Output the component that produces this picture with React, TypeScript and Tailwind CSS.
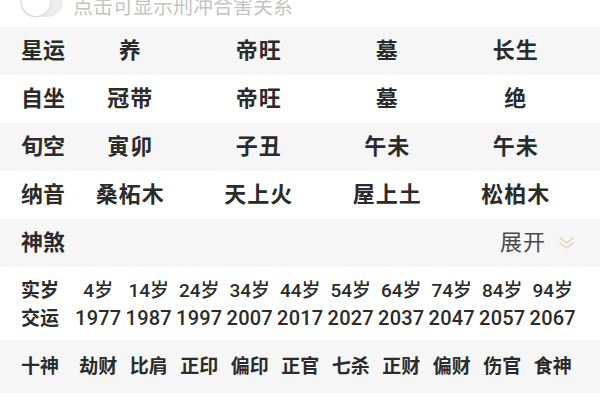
const baziRows = [
  { label: '星运', values: ['养', '帝旺', '墓', '长生'], gray: true },
  { label: '自坐', values: ['冠带', '帝旺', '墓', '绝'], gray: false },
  { label: '旬空', values: ['寅卯', '子丑', '午未', '午未'], gray: true },
  { label: '纳音', values: ['桑柘木', '天上火', '屋上土', '松柏木'], gray: false },
];

const ages = ['4岁', '14岁', '24岁', '34岁', '44岁', '54岁', '64岁', '74岁', '84岁', '94岁'];
const years = ['1977', '1987', '1997', '2007', '2017', '2027', '2037', '2047', '2057', '2067'];
const tenGods = ['劫财', '比肩', '正印', '偏印', '正官', '七杀', '正财', '偏财', '伤官', '食神'];

function DoubleChevron() {
  return (
    <svg width="17" height="14" viewBox="0 0 17 14" fill="none" stroke="#d9d2b4" strokeWidth="1.4" strokeLinecap="round" strokeLinejoin="round">
      <path d="M2 2 L8.5 7 L15 2" />
      <path d="M2 7 L8.5 12 L15 7" />
    </svg>
  );
}

export default function App() {
  return (
    <div
      className="w-[600px] h-[400px] overflow-hidden bg-white text-[#2b2b2b]"
      style={{ fontFamily: 'Roboto, "Noto Sans CJK SC", sans-serif' }}
    >
      {/* 顶部开关，被裁切了一半 */}
      <div className="h-[27px] overflow-hidden flex items-end pl-[20px]">
        <div className="flex items-center gap-[10px] mb-[10px]">
          <div className="w-[43px] h-[30px] rounded-full bg-[#ececec] flex items-center pl-[2px]">
            <div className="w-[28px] h-[28px] rounded-full bg-white shadow-sm" />
          </div>
          <span className="mt-[9px] text-[20px] leading-none text-[#c4c4c4] whitespace-nowrap">点击可显示刑冲合害关系</span>
        </div>
      </div>

      {/* 八字表 */}
      {baziRows.map((row) => (
        <div
          key={row.label}
          className={`h-[48px] flex items-center pl-[21px] pr-[20px] ${row.gray ? 'bg-[#f6f6f6]' : 'bg-white'}`}
        >
          <div className="w-[45px] shrink-0 whitespace-nowrap text-[22px] font-bold leading-none">{row.label}</div>
          <div className="flex-1 grid grid-cols-4">
            {row.values.map((v, i) => (
              <div key={i} className="text-center whitespace-nowrap text-[22px] font-bold leading-none tracking-[1px]">
                {v}
              </div>
            ))}
          </div>
        </div>
      ))}

      <div className="h-[48px] flex items-center justify-between pl-[21px] pr-[25px] bg-[#f6f6f6]">
        <div className="whitespace-nowrap text-[22px] font-bold leading-none">神煞</div>
        <div className="flex items-center gap-[12px]">
          <span className="text-[22px] leading-none text-[#4a4a4a] tracking-[1px]">展开</span>
          <DoubleChevron />
        </div>
      </div>

      {/* 大运 */}
      <div className="h-[73px] flex flex-col justify-center gap-[8px] pl-[21px] pr-[22px] pt-[2px]">
        <div className="flex items-center">
          <div className="w-[52px] shrink-0 whitespace-nowrap text-[19px] font-bold leading-none">实岁</div>
          <div className="flex-1 grid grid-cols-10">
            {ages.map((a) => (
              <div key={a} className="text-center text-[19px] font-medium leading-none whitespace-nowrap">{a}</div>
            ))}
          </div>
        </div>
        <div className="flex items-center">
          <div className="w-[52px] shrink-0 whitespace-nowrap text-[19px] font-bold leading-none">交运</div>
          <div className="flex-1 grid grid-cols-10">
            {years.map((y) => (
              <div key={y} className="text-center text-[20px] font-medium leading-none tracking-[0.2px] whitespace-nowrap">{y}</div>
            ))}
          </div>
        </div>
      </div>

      <div className="h-[53px] flex items-center pl-[21px] pr-[22px] bg-[#f6f6f6]">
        <div className="w-[52px] shrink-0 whitespace-nowrap text-[19px] font-bold leading-none">十神</div>
        <div className="flex-1 grid grid-cols-10">
          {tenGods.map((g, i) => (
            <div key={i} className="text-center text-[19px] font-bold leading-none whitespace-nowrap">{g}</div>
          ))}
        </div>
      </div>
    </div>
  );
}
